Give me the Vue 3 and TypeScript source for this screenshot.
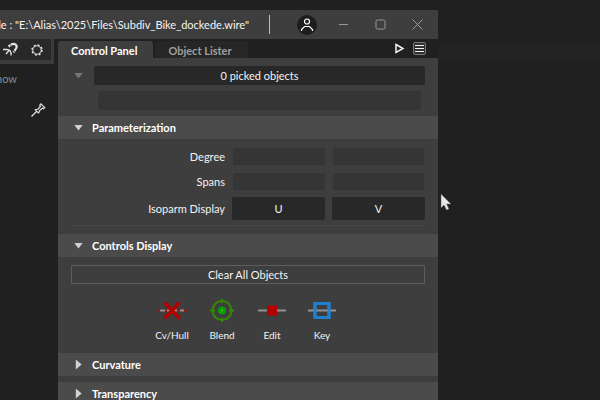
<script setup lang="ts">
import { ref } from 'vue'

type ControlKind = 'hull' | 'blend' | 'edit' | 'key'

const filePath = 'E:\\Alias\\2025\\Files\\Subdiv_Bike_dockede.wire'
const activeTab = ref('Control Panel')
const tabs: string[] = ['Control Panel', 'Object Lister']
const controls: { label: string; kind: ControlKind }[] = [
  { label: 'Cv/Hull', kind: 'hull' },
  { label: 'Blend', kind: 'blend' },
  { label: 'Edit', kind: 'edit' },
  { label: 'Key', kind: 'key' },
]
const numericRows: string[] = ['Degree', 'Spans']
const closedSections: string[] = ['Curvature', 'Transparency']
const parameterizationOpen = ref(true)
const controlsOpen = ref(true)
</script>

<template>
  <div class="desktop">
    <div class="window">
      <header class="titlebar">
        <div class="title">ede : "{{ filePath }}"</div>
        <span class="divider"></span>
        <button class="account" aria-label="Account">
          <svg width="20" height="20" viewBox="0 0 20 20">
            <circle cx="10" cy="6.5" r="2.5" />
            <path d="M4.5 16v-1.5l3-3h5l3 3V16" />
          </svg>
        </button>
        <button class="caption" aria-label="Minimize">
          <svg width="13" height="13" viewBox="0 0 13 13"><path d="M2 6.5h9" /></svg>
        </button>
        <button class="caption" aria-label="Maximize">
          <svg width="13" height="13" viewBox="0 0 13 13"><rect x="2" y="2" width="9" height="9" rx="1.5" /></svg>
        </button>
        <button class="caption" aria-label="Close">
          <svg width="13" height="13" viewBox="0 0 13 13"><path d="M1.5 1.5l10 10M11.5 1.5l-10 10" /></svg>
        </button>
      </header>

      <div class="workspace">
        <aside class="side">
          <div class="toolbar">
            <button aria-label="Snap to curve">
              <svg width="16" height="16" viewBox="0 0 16 16">
                <path d="M1 7.5h3.500c3.500 0 5 2 4.500 6M4 12l3-3.500" stroke-width="1.300" />
                <path d="M6.500 4.500l3-2c3-2 6.500 1 4.500 4l-2.500 4" stroke-width="2.200" />
                <path d="M8.300 2.500l1 2M11 8.500l2 1.200" stroke="#282828" stroke-width=".8" />
              </svg>
            </button>
            <button aria-label="Settings">
              <svg width="14" height="14" viewBox="0 0 14 14">
                <circle cx="7" cy="7" r="4.200" stroke-width="1" />
                <circle cx="7" cy="7" r="5" stroke-width="1.500" stroke-dasharray="1.960 1.960" />
              </svg>
            </button>
          </div>
          <div class="menu">now</div>
          <button class="pin" aria-label="Pin">
            <svg width="16" height="16" viewBox="0 0 16 16">
              <path d="M1.500 14.500l5-5M4.800 7.300l4 4M5.600 7.800l2.600-.8 2.300-2.800-.8-1 1.300-1.400 3.800 3.800-1.400 1.200-1-.7L9.600 8.600l-1 2.300" stroke-width="1.200" />
            </svg>
          </button>
        </aside>

        <main class="panel">
          <nav class="tabs">
            <button
              v-for="tab in tabs"
              :key="tab"
              class="tab"
              :class="{ active: activeTab === tab }"
              @click="activeTab = tab"
            >{{ tab }}</button>
            <div class="tab-tools">
              <button aria-label="Play">
                <svg width="11" height="11" viewBox="0 0 11 11"><path d="M2 1.5L9 5.5L2 9.5Z" /></svg>
              </button>
              <button class="list-menu" aria-label="Panel menu">
                <svg width="9" height="9" viewBox="0 0 9 9"><path d="M0 1.5h9M0 4.5h9M0 7.5h9" /></svg>
              </button>
            </div>
          </nav>

          <div class="picked">
            <span class="arrow down muted"></span>
            <button class="dark-button">0 picked objects</button>
            <input class="object-name" type="text" aria-label="Object name" disabled />
          </div>

          <section>
            <button class="section-head" @click="parameterizationOpen = !parameterizationOpen">
              <span class="arrow" :class="{ down: parameterizationOpen }"></span>Parameterization
            </button>
            <div v-if="parameterizationOpen" class="parameters">
              <div v-for="name in numericRows" :key="name" class="numeric-row">
                <label :for="`${name}-u`">{{ name }}</label>
                <input :id="`${name}-u`" type="text" disabled />
                <input type="text" :aria-label="`${name} V`" disabled />
              </div>
              <div class="display-row">
                <span>Isoparm Display</span>
                <button class="dark-button">U</button>
                <button class="dark-button">V</button>
              </div>
            </div>
          </section>

          <section>
            <button class="section-head" @click="controlsOpen = !controlsOpen">
              <span class="arrow" :class="{ down: controlsOpen }"></span>Controls Display
            </button>
            <div v-if="controlsOpen" class="controls">
              <button class="clear">Clear All Objects</button>
              <div class="control-list">
                <button v-for="item in controls" :key="item.kind" class="control">
                  <svg width="32" height="26" viewBox="0 0 32 26">
                    <template v-if="item.kind === 'hull'">
                      <path d="M1 13.5h30" stroke="#bd0a0a" stroke-width="1.5" />
                      <path d="M4 13.5h5M11 13.5h4M18 13.5h3M24 13.5h4" stroke="#929292" stroke-width="2" />
                      <path d="M8.500 5.500l15 16M23.500 5.500l-15 16" stroke="#b50000" stroke-width="3.500" />
                    </template>
                    <template v-else-if="item.kind === 'blend'">
                      <circle cx="16" cy="13.500" r="9.500" fill="none" stroke="#368800" stroke-width="2" />
                      <path d="M16 2v4M16 21v4M4 13.500h5M23 13.500h5" stroke="#368800" stroke-width="2" />
                      <circle cx="16" cy="13.500" r="4" fill="#08a000" />
                      <circle cx="16" cy="13.500" r="1" fill="#55bd22" />
                    </template>
                    <template v-else-if="item.kind === 'edit'">
                      <path d="M2 13.500h28" stroke="#929292" stroke-width="2" />
                      <rect x="11" y="8.500" width="10" height="10" fill="#b50000" />
                    </template>
                    <template v-else>
                      <rect x="9" y="6.500" width="14" height="14" fill="none" stroke="#207fd0" stroke-width="3" />
                      <path d="M2 13.500h28" stroke="#929292" stroke-width="2" />
                      <path d="M9 5v17M23 5v17" stroke="#207fd0" stroke-width="3" />
                    </template>
                  </svg>
                  <span>{{ item.label }}</span>
                </button>
              </div>
            </div>
          </section>

          <section v-for="name in closedSections" :key="name" class="closed">
            <button class="section-head"><span class="arrow"></span>{{ name }}</button>
          </section>
        </main>
      </div>
    </div>

    <div class="backdrop"></div>
    <svg class="pointer" width="12" height="18" viewBox="0 0 12 18">
      <path d="M1 1v14l3-3 2.500 5 2.500-1-2.300-5H11Z" fill="#e8e8e8" stroke="#555" stroke-width=".5" />
    </svg>
  </div>
</template>

<style>
body {
  margin: 0;
  background: #202020;
}
</style>

<style scoped>
.desktop {
  position: relative;
  display: grid;
  grid-template-columns: minmax(0, 1fr) 162px;
  box-sizing: border-box;
  height: 100vh;
  padding-top: 10px;
  overflow: hidden;
  background: #202020;
  color: #f4f4f4;
  font: 11px/16px Lato, "Open Sans", sans-serif;
}
button,
input {
  box-sizing: border-box;
  min-width: 0;
  margin: 0;
  padding: 0;
  border: 0;
  background: none;
  color: inherit;
  font: inherit;
}
svg {
  display: block;
  flex: none;
}
.window {
  min-width: 0;
}
.titlebar {
  display: flex;
  align-items: center;
  height: 29px;
  padding-right: 2px;
  background: #3e3e3e;
}
.title {
  display: flex;
  flex: 1;
  justify-content: flex-end;
  min-width: 0;
  overflow: hidden;
  white-space: pre;
}
.divider {
  width: 1px;
  height: 19px;
  margin: 0 27px 0 20px;
  background: #bcbcbc;
}
.account {
  width: 20px;
  height: 20px;
  margin-right: 8px;
  border-radius: 50%;
  background: #1d1d1d;
}
.account svg {
  fill: none;
  stroke: #fff;
  stroke-width: 1.2;
}
.caption {
  display: grid;
  place-items: center;
  width: 37px;
  height: 29px;
}
.caption svg {
  fill: none;
  stroke: #999;
}
.workspace {
  display: grid;
  grid-template-columns: 58px minmax(0, 1fr);
}
.side {
  background: #202020;
}
.side svg {
  fill: none;
  stroke: #e2e2e2;
}
.toolbar {
  display: flex;
  align-items: center;
  gap: 12px;
  box-sizing: border-box;
  width: 54px;
  height: 25px;
  padding-left: 2px;
  border-right: 3px solid #3b3b3b;
  border-bottom: 4px solid #3b3b3b;
  background: #282828;
}
.menu {
  display: flex;
  justify-content: flex-end;
  width: 17px;
  padding-top: 7px;
  color: #858b93;
}
.pin {
  display: block;
  padding: 15px 0 0 30px;
}
.panel {
  background: #3e3e3e;
}
.tabs {
  display: flex;
  align-items: flex-end;
  gap: 2px;
  height: 19px;
  background: #202020;
}
.tab {
  height: 17px;
  padding: 3px 16px 0 13px;
  border-radius: 3px 3px 0 0;
  background: #262626;
  color: #a0a0a0;
  font-weight: 700;
  line-height: 14px;
}
.tab.active {
  background: #3e3e3e;
  color: #fff;
}
.tab-tools {
  display: flex;
  align-items: center;
  gap: 8px;
  height: 19px;
  margin-left: auto;
  padding-right: 12px;
}
.tab-tools svg {
  fill: none;
  stroke: #f4f4f4;
  stroke-width: 1.5;
}
.list-menu {
  display: grid;
  place-items: center;
  width: 13px;
  height: 13px;
  border: 1px solid #777;
  border-radius: 2px;
  background: #303030;
}
.list-menu svg {
  stroke-width: 1;
}
.picked {
  display: grid;
  grid-template-columns: 20px minmax(0, 1fr);
  align-items: center;
  gap: 6px 0;
  padding: 8px 13px 6px 16px;
}
.dark-button {
  height: 19px;
  border-radius: 2px;
  background: #282828;
}
.object-name {
  grid-column: 2;
  height: 19px;
  margin: 0 4px;
  border-radius: 2px;
  background: #353535;
}
.section-head {
  display: flex;
  align-items: center;
  gap: 9px;
  width: 100%;
  height: 23px;
  padding-left: 16px;
  background: #4b4b4b;
  color: #fff;
  font-weight: 700;
}
.arrow {
  width: 9px;
  height: 10px;
  background: #d2d2d2;
  clip-path: polygon(20% 0, 85% 50%, 20% 100%);
}
.arrow.down {
  height: 6px;
  clip-path: polygon(0 0, 100% 0, 50% 100%);
}
.arrow.muted {
  background: #77777b;
}
.parameters {
  display: flex;
  flex-direction: column;
  gap: 7px;
  margin: 0 13px;
  padding: 8px 0 5px;
  border-bottom: 1px solid #474747;
}
.numeric-row,
.display-row {
  display: grid;
  grid-template-columns: 154px minmax(0, 1fr) minmax(0, 1fr);
  align-items: end;
  text-align: right;
}
.numeric-row {
  gap: 8px;
  padding-right: 1px;
  height: 18px;
}
.numeric-row input {
  height: 17px;
  background: #353535;
}
.display-row {
  gap: 7px;
  align-items: center;
}
.display-row .dark-button {
  height: 23px;
}
.controls {
  padding: 8px 13px 10px;
}
section + section {
  margin-top: 8px;
}
section + .closed {
  margin-top: 0;
}
.closed + .closed {
  margin-top: 6px;
}
.clear {
  display: block;
  width: 100%;
  height: 19px;
  border: 1px solid #5d5d5d;
}
.control-list {
  display: flex;
  justify-content: center;
  padding: 13px 2px 0 0;
}
.control {
  display: flex;
  flex-direction: column;
  align-items: center;
  gap: 4px;
  width: 50px;
  font-size: 10px;
}
.backdrop {
  height: 16px;
  margin-top: 34px;
  background: #232323;
}
.pointer {
  position: absolute;
  top: 193px;
  right: 148px;
}
</style>
